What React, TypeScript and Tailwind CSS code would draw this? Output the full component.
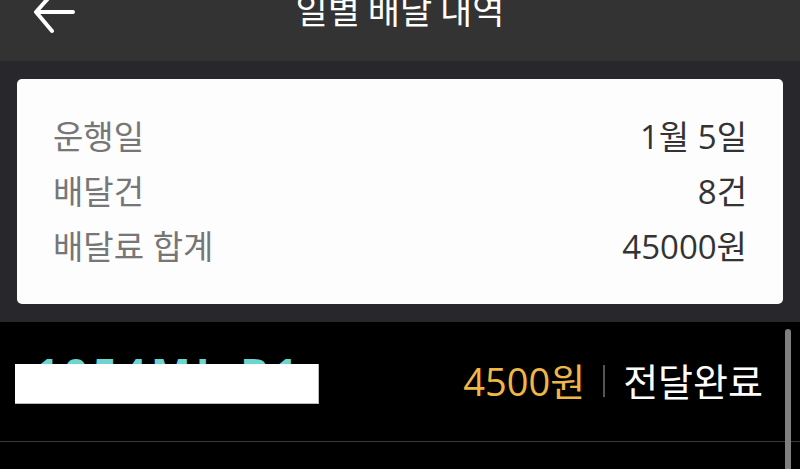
import React from "react";

export default function App() {
  const font = { fontFamily: '"Open Sans", "Noto Sans CJK KR", sans-serif' };
  return (
    <div className="w-[800px] h-[469px] overflow-hidden bg-black relative" style={font}>
      {/* Header */}
      <div className="h-[61px] bg-[#333333] relative">
        <div className="h-[24px] flex items-center relative">
          <svg className="absolute left-[31px] top-[-9px]" width="46" height="44" viewBox="0 0 46 44">
            <path d="M42 21 H6 M21 3 L5 21 L21 40" stroke="white" strokeWidth="4" strokeLinecap="round" strokeLinejoin="round" fill="none" />
          </svg>
          <div className="w-full text-center text-white text-[35px] leading-[35px] mt-[-8px]" style={{ fontFamily: '"Noto Sans CJK KR", sans-serif' }}>일별 배달 내역</div>
        </div>
      </div>
      {/* Summary */}
      <div className="bg-[#28282c] pt-[18px] pb-[18px] px-[17px]">
        <div className="bg-[#fdfdfd] rounded-[5px] h-[225px] pt-[30px] px-[36px]">
          {[
            ["운행일", "1월 5일"],
            ["배달건", "8건"],
            ["배달료 합계", "45000원"],
          ].map(([k, v]) => (
            <div key={k} className="h-[55px] flex items-center justify-between text-[33px] leading-[40px]">
              <span className="text-[#767676]">{k}</span>
              <span className="text-[#333333]">{v}</span>
            </div>
          ))}
        </div>
      </div>
      {/* List */}
      <div className="bg-black">
        <div className="h-[120px] flex items-center justify-between pl-[15px] pr-[37px] border-b border-[#3a3a3a]">
          <div className="relative h-[40px] w-[304px]">
            <div className="absolute left-[20px] top-[-10px] text-[#6dd5cf] text-[42px] font-bold leading-[42px] tracking-[5px]">1054ML B1</div>
            <div className="absolute inset-0 top-[2px] bottom-[-2px] bg-white border-b border-r border-[#bbbbbb]" />
          </div>
          <div className="flex items-center text-[38px] leading-[44px] mt-[-2px]">
            <span className="text-[#f0b646]">4500원</span>
            <span className="w-[2px] h-[32px] bg-[#555555] mx-[18px]" />
            <span className="text-white">전달완료</span>
          </div>
        </div>
      </div>
      {/* Scrollbar */}
      <div className="absolute left-[785px] top-[329px] w-[6px] h-[160px] rounded-full bg-[#7f7f7f]" />
    </div>
  );
}
